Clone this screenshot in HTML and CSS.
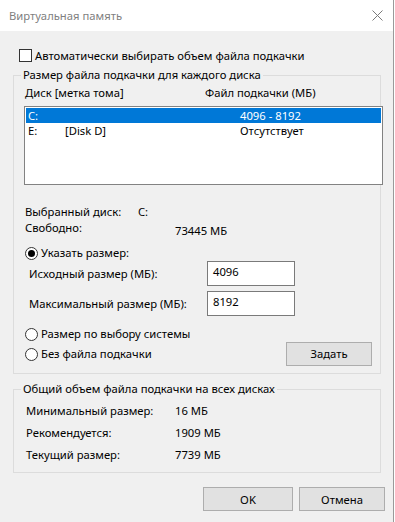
FILE: index.html
```html
<!DOCTYPE html>
<html lang="ru">
<head>
<meta charset="UTF-8">
<title>Виртуальная память</title>
<link rel="stylesheet" href="styles.css">
</head>
<body>
<div class="window">
    <div class="titlebar">
        <span class="title">Виртуальная память</span>
        <svg class="close" width="11" height="11" viewBox="0 0 11 11"><path d="M0.5 0.5L10.5 10.5M10.5 0.5L0.5 10.5" stroke="#7a7a7a" stroke-width="1" fill="none"/></svg>
    </div>
    <div class="content">
        <div class="check-row">
            <span class="checkbox"></span>
            <span>Автоматически выбирать объем файла подкачки</span>
        </div>

        <div class="group group-disks">
            <div class="group-title">Размер файла подкачки для каждого диска</div>
            <div class="list-head">
                <span>Диск [метка тома]</span>
                <span>Файл подкачки (МБ)</span>
            </div>
            <div class="listbox">
                <div class="list-row selected"><span>C:</span><span></span><span>4096 - 8192</span></div>
                <div class="list-row"><span>E:</span><span>[Disk D]</span><span>Отсутствует</span></div>
            </div>

            <div class="info-row info-disk"><span>Выбранный диск:</span><span>C:</span></div>
            <div class="info-row info-free"><span>Свободно:</span><span class="free-val">73445 МБ</span></div>

            <div class="radio-row radio-custom">
                <span class="radio checked"></span>
                <span>Указать размер:</span>
            </div>
            <div class="field-row">
                <span class="field-label">Исходный размер (МБ):</span>
                <div class="input">4096</div>
            </div>
            <div class="field-row field-max">
                <span class="field-label">Максимальный размер (МБ):</span>
                <div class="input">8192</div>
            </div>
            <div class="radio-row radio-system">
                <span class="radio"></span>
                <span>Размер по выбору системы</span>
            </div>
            <div class="radio-row radio-none">
                <span class="radio"></span>
                <span>Без файла подкачки</span>
                <button class="btn btn-set">Задать</button>
            </div>
        </div>

        <div class="group group-total">
            <div class="group-title">Общий объем файла подкачки на всех дисках</div>
            <div class="total-rows">
                <div class="total-row"><span>Минимальный размер:</span><span>16 МБ</span></div>
                <div class="total-row"><span>Рекомендуется:</span><span>1909 МБ</span></div>
                <div class="total-row"><span>Текущий размер:</span><span>7739 МБ</span></div>
            </div>
        </div>

        <div class="footer-buttons">
            <button class="btn btn-ok">OK</button>
            <button class="btn btn-cancel">Отмена</button>
        </div>
    </div>
</div>
</body>
</html>
```

FILE: styles.css
```css
body{
    margin:0;
    background:#fff;
    font-family:"Noto Sans","Liberation Sans",sans-serif;
    font-size:11.25px;
    color:#000;
}
.window{
    width:393px;
    height:522px;
    border-right:1px solid #9a9a9a;
    background:#f0f0f0;
    display:flex;
    flex-direction:column;
}
.titlebar{
    height:31px;
    background:#fff;
    display:flex;
    align-items:center;
    justify-content:space-between;
    padding:0 9px 0 9px;
}
.title{color:#7f7f7f;line-height:16px;}
.close{margin-right:1px;}
.content{flex:1;}

.check-row{
    display:flex;
    align-items:center;
    gap:3px;
    height:16px;
    margin-top:16px;
    padding-left:19px;
}
.checkbox{
    width:11px;
    height:11px;
    border:1px solid #333;
    background:#fff;
}

.group{
    border:1px solid #dcdcdc;
    margin-left:13px;
    padding:0 8px 0 10px;
    box-sizing:border-box;
    width:368px;
}
.group-title{
    margin:-9px 0 0 -3px;
    padding:0 2px;
    width:max-content;
    line-height:16px;
    background:#f0f0f0;
}
.group-disks{margin-top:12px;padding-bottom:7px;}

.list-head{
    display:grid;
    grid-template-columns:180px 1fr;
    line-height:16px;
    margin-top:2px;
    padding-left:1px;
}
.listbox{
    width:359px;
    height:79px;
    box-sizing:border-box;
    margin-top:5px;
    border:1px solid #828282;
    background:#fff;
    padding:1px;
}
.list-row{
    display:grid;
    grid-template-columns:37px 175px 1fr;
    height:15px;
    line-height:15px;
    padding-left:2px;
}
.list-row.selected{background:#0078d7;color:#fff;}

.info-row{display:flex;height:16px;line-height:16px;padding-left:1px;}
.info-disk{margin-top:19px;}
.info-disk span:first-child{width:113px;}
.info-free span:first-child{width:150px;}
.free-val{padding-top:3px;}

.radio-row{
    display:flex;
    align-items:center;
    gap:3px;
    line-height:16px;
    padding-left:1px;
}
.radio{
    width:11px;
    height:11px;
    border:1px solid #333;
    border-radius:50%;
    background:#fff;
    display:flex;
    align-items:center;
    justify-content:center;
}
.radio.checked::after{
    content:"";
    width:7px;
    height:7px;
    border-radius:50%;
    background:#000;
}
.radio-custom{margin-top:9px;}
.radio-system{margin-top:10px;}
.radio-none{height:24px;}

.field-row{
    display:flex;
    align-items:center;
    height:25px;
    padding-left:5px;
}
.field-max{margin-top:5px;}
.field-label{width:178px;}
.input{
    width:88px;
    height:25px;
    box-sizing:border-box;
    border:1px solid #7a7a7a;
    background:#fff;
    padding:2px 0 0 5px;
    line-height:16px;
}

.btn{
    font:inherit;
    color:#000;
    background:#e1e1e1;
    border:1px solid #adadad;
    height:24px;
    padding:0;
}
.btn-set{width:86px;margin-left:auto;}

.group-total{margin-top:15px;padding-bottom:6px;}
.total-rows{margin-top:3px;}
.total-row{display:flex;height:22px;line-height:22px;padding-left:2px;}
.total-row span:first-child{width:149px;}

.footer-buttons{
    display:flex;
    justify-content:flex-end;
    gap:6px;
    margin-top:14px;
    padding-right:8px;
}
.btn-ok{width:90px;}
.btn-cancel{width:86px;}
```
